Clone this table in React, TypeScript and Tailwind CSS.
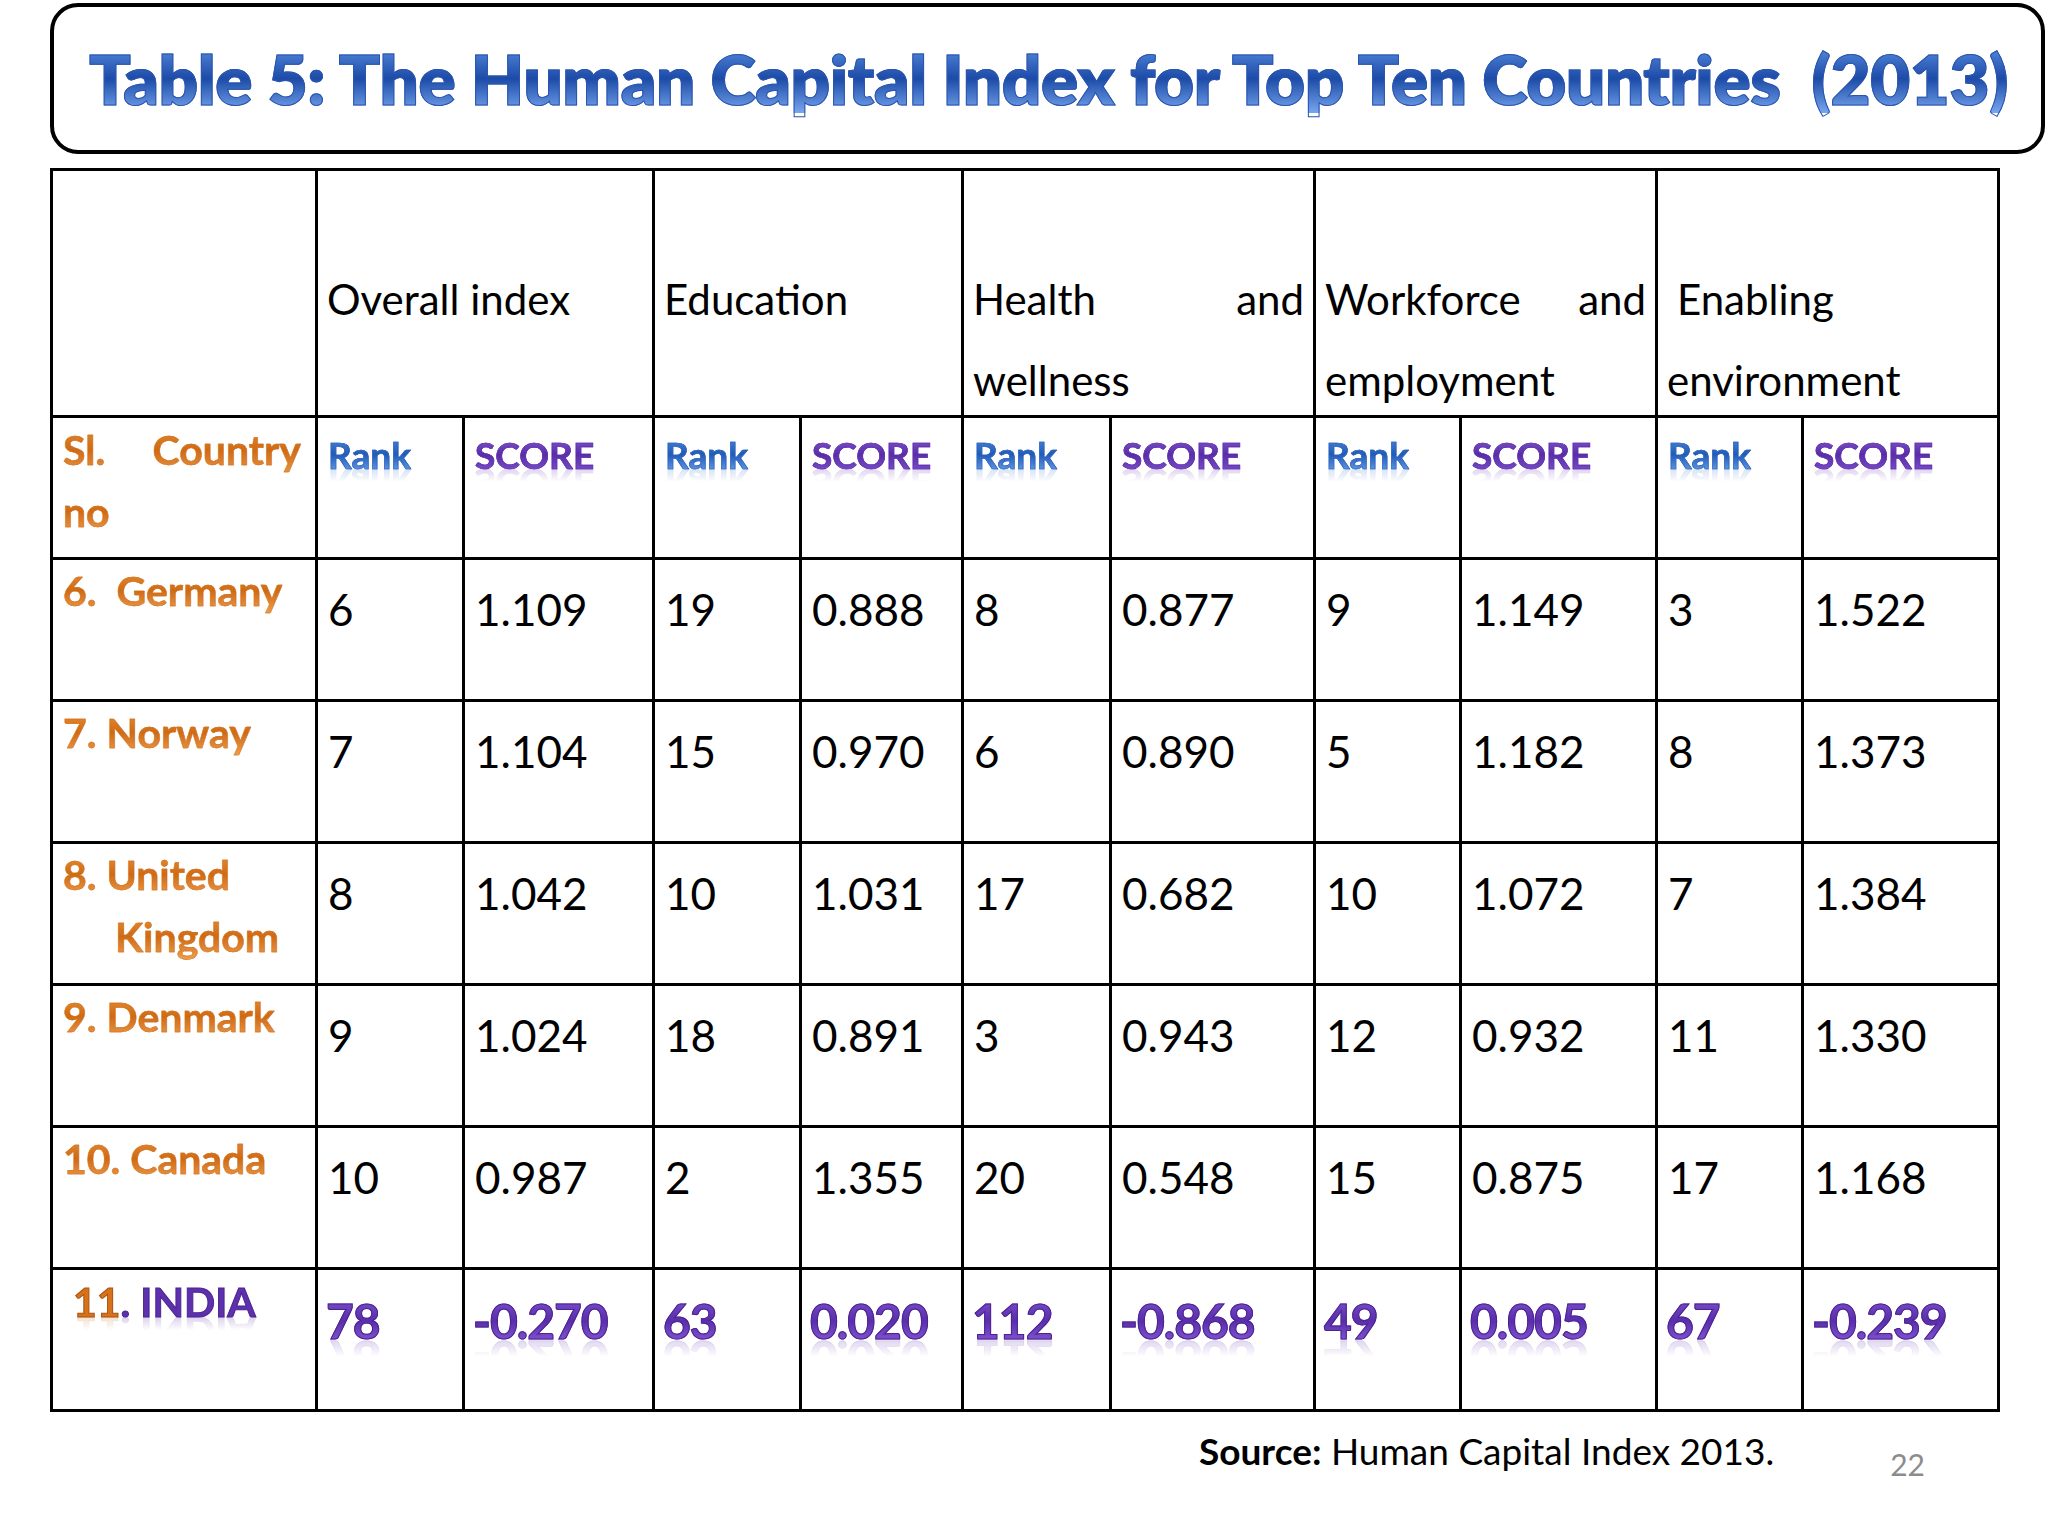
import React from "react";

const blueText =
  "bg-linear-to-b from-[#5b8ee0] via-[#1c4ba8] to-[#79a6ee] bg-clip-text text-transparent [-webkit-text-stroke:1px_#2a54ad]";
const rankText =
  "inline-block leading-none bg-linear-to-b from-[#4f86d8] via-[#1f5bb8] to-[#6aa0ea] bg-clip-text text-transparent [-webkit-text-stroke:0.6px_#2c62b8] [-webkit-box-reflect:below_-8px_linear-gradient(transparent_55%,rgba(0,0,0,0.3))]";
const scoreText =
  "inline-block leading-none bg-linear-to-b from-[#8458cf] via-[#5a2ca8] to-[#7d50cc] bg-clip-text text-transparent [-webkit-text-stroke:0.6px_#5a2ca8] [-webkit-box-reflect:below_-8px_linear-gradient(transparent_55%,rgba(0,0,0,0.3))]";
const orangeText =
  "bg-linear-to-b from-[#ea9438] via-[#cf6a12] to-[#f0a24e] bg-clip-text text-transparent [-webkit-text-stroke:0.4px_#d06c14]";
const indiaText =
  "inline-block leading-none bg-linear-to-b from-[#7d50cc] via-[#5a2dab] to-[#8a5ad8] bg-clip-text text-transparent [-webkit-text-stroke:1px_#4a2590] [-webkit-box-reflect:below_-10px_linear-gradient(transparent_55%,rgba(0,0,0,0.3))]";

const cell = "border-[3px] border-black align-top p-0";

const rows = [
  { name: ["6.\u00a0 Germany"], vals: ["6", "1.109", "19", "0.888", "8", "0.877", "9", "1.149", "3", "1.522"] },
  { name: ["7. Norway"], vals: ["7", "1.104", "15", "0.970", "6", "0.890", "5", "1.182", "8", "1.373"] },
  { name: ["8. United", "Kingdom"], vals: ["8", "1.042", "10", "1.031", "17", "0.682", "10", "1.072", "7", "1.384"] },
  { name: ["9. Denmark"], vals: ["9", "1.024", "18", "0.891", "3", "0.943", "12", "0.932", "11", "1.330"] },
  { name: ["10. Canada"], vals: ["10", "0.987", "2", "1.355", "20", "0.548", "15", "0.875", "17", "1.168"] },
];

const india = ["78", "-0.270", "63", "0.020", "112", "-0.868", "49", "0.005", "67", "-0.239"];

const widths = [265, 147, 190, 147, 162, 148, 204, 146, 196, 146, 196];

export default function App() {
  return (
    <div className="w-[2048px] h-[1536px] bg-white font-['Lato',sans-serif] text-black overflow-hidden">
      {/* title */}
      <div className="ml-[50px] mt-[3px] w-[1995px] h-[151px] border-[4px] border-black rounded-[28px] flex items-center pl-[35px]">
        <h1 className={`text-[69px] font-extrabold tracking-[-0.4px] leading-none whitespace-pre ${blueText}`}>
          {"Table 5: The Human Capital Index for Top Ten Countries  (2013)"}
        </h1>
      </div>

      <table className="ml-[50px] mt-[14px] w-[1947px] table-fixed border-collapse border-[3px] border-black">
        <colgroup>
          {widths.map((w, i) => (
            <col key={i} style={{ width: w }} />
          ))}
        </colgroup>
        <tbody>
          <tr className="h-[247px]">
            <td className={cell}></td>
            {[
              ["Overall index", ""],
              ["Education", ""],
              ["Health and", "wellness"],
              ["Workforce and", "employment"],
              ["Enabling", "environment"],
            ].map(([a, b], i) => (
              <td key={i} colSpan={2} className={`${cell} text-[42px] pt-[88px] pl-[9px] pr-[9px]`}>
                {b && i < 4 ? (
                  <div className="flex justify-between leading-[81px]">
                    {a.split(" ").map((w) => (
                      <span key={w}>{w}</span>
                    ))}
                  </div>
                ) : (
                  <div className={i === 4 ? "pl-[10px] leading-[81px]" : "leading-[81px]"}>{a}</div>
                )}
                {b && <div className="mt-[10px] leading-[60px]">{b}</div>}
              </td>
            ))}
          </tr>

          <tr className="h-[142px]">
            <td className={`${cell} pl-[10px] pr-[14px] pt-[1px] text-[41px] leading-[62px] font-bold`}>
              <div className="flex justify-between">
                <span className={orangeText}>Sl.</span>
                <span className={orangeText}>Country</span>
              </div>
              <div>
                <span className={orangeText}>no</span>
              </div>
            </td>
            {Array.from({ length: 5 }).flatMap((_, i) => [
              <td key={`r${i}`} className={`${cell} pl-[10px] pt-[9px] text-[37px] font-bold`}>
                <span className={rankText}>Rank</span>
              </td>,
              <td key={`s${i}`} className={`${cell} pl-[10px] pt-[9px] text-[37px] font-bold`}>
                <span className={scoreText}>SCORE</span>
              </td>,
            ])}
          </tr>

          {rows.map((r) => (
            <tr key={r.name[0]} className="h-[142px]">
              <td className={`${cell} pl-[10px] pt-0 text-[41px] leading-[62px] font-bold`}>
                <div>
                  <span className={orangeText}>{r.name[0]}</span>
                </div>
                {r.name[1] && (
                  <div className="pl-[52px]">
                    <span className={orangeText}>{r.name[1]}</span>
                  </div>
                )}
              </td>
              {r.vals.map((v, i) => (
                <td key={i} className={`${cell} pl-[10px] pt-[18px] text-[44px] leading-[62px]`}>
                  {v}
                </td>
              ))}
            </tr>
          ))}

          <tr className="h-[142px]">
            <td className={`${cell} pl-[20px] pt-[1px] text-[41px] font-bold`}>
              <span className="inline-block leading-none [-webkit-box-reflect:below_-10px_linear-gradient(transparent_55%,rgba(0,0,0,0.3))]">
                <span className="text-[#d8721a] [-webkit-text-stroke:1px_#a85210]">11</span>
                <span className="text-[#5e30ae] [-webkit-text-stroke:1px_#4a2590]">. INDIA</span>
              </span>
            </td>
            {india.map((v, i) => (
              <td key={i} className={`${cell} pl-[8px] pt-[15px] text-[48px] font-bold tracking-[-1px]`}>
                <span className={indiaText}>{v}</span>
              </td>
            ))}
          </tr>
        </tbody>
      </table>

      {/* footer */}
      <div className="flex items-start pl-[1199px] mt-[15px]">
        <span className="text-[37px] leading-[48px]">
          <span className="font-bold">Source:</span> Human Capital Index 2013.
        </span>
        <span className="ml-[116px] mt-[22px] text-[30px] leading-[30px] text-[#8c8c8c]">22</span>
      </div>
    </div>
  );
}
